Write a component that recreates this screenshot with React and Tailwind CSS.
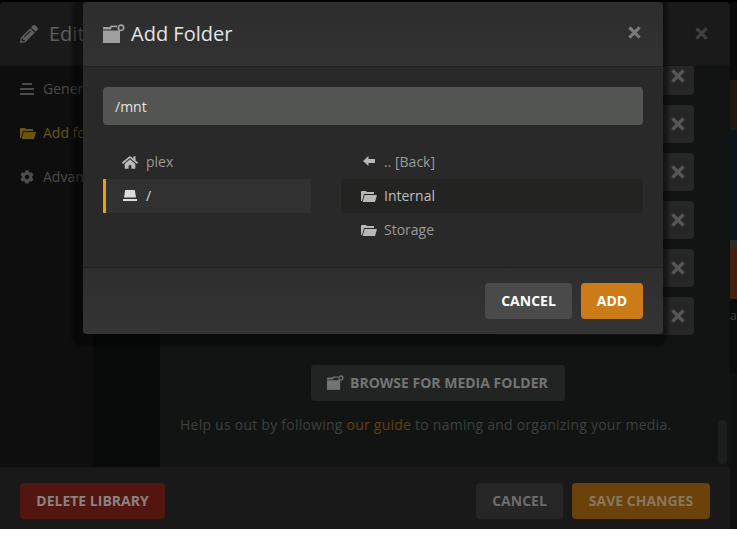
import React from "react";
import { FaCog, FaHome, FaPencilAlt } from "react-icons/fa";

function FolderAdd({ className }) {
  return (
    <svg viewBox="0 0 22 19" className={className} fill="currentColor">
      <path d="M0 5.5 L0 3.6 Q0 3 .6 3 L7 3 L8 1.6 L14 1.6 L14 3.2 L8.8 3.2 L8 5.5 Z" />
      <path d="M0 6.5 H17 V19 H0 Z" />
      <circle cx="18" cy="3.8" r="2.7" fill="none" stroke="currentColor" strokeWidth="1.7" />
    </svg>
  );
}

function FolderOpen({ className }) {
  return (
    <svg viewBox="0 0 16 12" className={className} fill="currentColor">
      <path d="M0 2 Q0 1 1 1 H5 L6 2 H13 V4 H3 L1 11 H0 Z" />
      <path d="M3.6 5 H16 L14 12 H1.6 Z" />
    </svg>
  );
}

function Drive({ className }) {
  return (
    <svg viewBox="0 0 14 12" className={className} fill="currentColor">
      <path d="M2.2 0 H11.8 L13 7.5 H1 Z" />
      <rect x="0" y="9" width="14" height="2" />
    </svg>
  );
}

function Lines({ className }) {
  return (
    <svg viewBox="0 0 14 12" className={className} fill="currentColor">
      <rect x="2" y="0" width="10" height="2" />
      <rect x="0" y="5" width="14" height="2" />
      <rect x="0" y="10" width="14" height="2" />
    </svg>
  );
}

function Cross({ className }) {
  return (
    <svg viewBox="0 0 14 14" className={className} fill="none" stroke="currentColor" strokeWidth="3.4">
      <path d="M1.5 1.5 L12.5 12.5 M12.5 1.5 L1.5 12.5" />
    </svg>
  );
}

function BackArrow({ className }) {
  return (
    <svg viewBox="0 0 12 10" className={className} fill="currentColor">
      <path d="M0 5 L5.5 0 V3 H12 V7 H5.5 V10 Z" />
    </svg>
  );
}

function SideItem({ icon, label, active }) {
  return (
    <div className={`flex items-center h-11 pl-5 text-sm whitespace-nowrap ${active ? "text-[#6b5410]" : "text-[#4c4c4c]"}`}>
      <span className="w-[23px] shrink-0">{icon}</span>
      {label}
    </div>
  );
}

function RemoveRow() {
  return (
    <div className="flex items-center justify-end pr-[9px] bg-[#262626] rounded-sm w-[200px] h-[38px] text-[#565656]">
      <Cross className="w-[14px] h-[14px]" />
    </div>
  );
}

function Background() {
  return (
    <div className="flex-1 flex flex-col min-w-0">
      <div className="h-[64px] shrink-0 bg-[#1a1a1a] rounded-t-sm flex items-center pl-5 pr-[22px] border-b border-[#161616]">
        <FaPencilAlt className="w-[18px] h-[18px] text-[#5e5e5e] mr-[11px]" />
        <span className="text-xl text-[#5f5f5f]">Edit Library</span>
        <Cross className="w-[13px] h-[13px] ml-auto text-[#3f3f3f]" />
      </div>

      <div className="flex-1 flex min-h-0">
        <div className="w-[93px] bg-[#0e0e0e] pt-[1px] shrink-0">
          <SideItem icon={<Lines className="w-[14px] h-[12px]" />} label="General" />
          <SideItem icon={<FolderOpen className="w-[16px] h-[12px]" />} label="Add folders" active />
          <SideItem icon={<FaCog className="w-[14px] h-[14px]" />} label="Advanced" />
        </div>
        <div className="w-[67px] bg-[#080a09] shrink-0" />
        <div className="flex-1 relative bg-[#111413] overflow-hidden">
          <div className="flex flex-col items-end gap-[10px] pr-[36px] mt-[-9px]">
            {[0, 1, 2, 3, 4, 5].map((i) => (
              <RemoveRow key={i} />
            ))}
          </div>
          <div className="flex justify-start pl-[151px] mt-[30px]">
            <div className="flex items-center h-9 w-[254px] rounded-sm bg-[#222423] text-[#747474] text-sm font-bold pl-4 whitespace-nowrap">
              <FolderAdd className="w-[17px] h-[15px] mr-[6px] mb-[2px]" />
              BROWSE FOR MEDIA FOLDER
            </div>
          </div>
          <p className="mt-[14px] pl-5 text-sm tracking-[0.24px] leading-[20px] text-[#3d403f] whitespace-nowrap">
            Help us out by following <span className="text-[#644107]">our guide</span> to naming and organizing your media.
          </p>
          <div className="absolute right-[3px] bottom-[3px] w-[9px] h-[44px] rounded-sm bg-[#1b1e1d]" />
        </div>
      </div>

      <div className="h-[62px] shrink-0 bg-[#191919] flex items-center pl-5 pr-5 gap-[9px] pt-[6px]">
        <div className="flex items-center justify-center w-[145px] h-9 rounded-sm bg-[#53150f] text-[#8c8280] text-sm font-bold mr-auto">
          DELETE LIBRARY
        </div>
        <div className="flex items-center justify-center w-[87px] h-9 rounded-sm bg-[#262626] text-[#6c6c6c] text-sm font-bold">
          CANCEL
        </div>
        <div className="flex items-center justify-center w-[138px] h-9 rounded-sm bg-[#6b4209] text-[#88775e] text-sm font-bold">
          SAVE CHANGES
        </div>
      </div>
    </div>
  );
}

function PosterStrip() {
  return (
    <div className="w-[7px] shrink-0 flex flex-col overflow-hidden bg-[#0a0a0a]">
      <div className="h-[78px] bg-[#0a0a0a]" />
      <div className="h-[50px] bg-[#1f1712]" />
      <div className="h-[110px] bg-[#0d141b]" />
      <div className="h-[8px] bg-[#2a2a2a]" />
      <div className="h-[51px] bg-[#44200f]" />
      <div className="h-[10px] bg-[#0b0b0b]" />
      <div className="h-[14px] bg-[#0b0b0b] text-[12px] leading-[14px] text-[#3e3e3e] overflow-hidden">ar</div>
      <div className="h-[50px] bg-[#0b0b0b]" />
      <div className="flex-1 bg-[#0e1010]" />
    </div>
  );
}

function ListRow({ icon, label, className = "", textClass = "text-[#9a9a9a]" }) {
  return (
    <div className={`flex items-center h-[34px] text-sm ${className}`}>
      <span className="w-[23px] shrink-0 flex items-center text-[#b8b8b8]">{icon}</span>
      <span className={textClass}>{label}</span>
    </div>
  );
}

function AddFolderModal() {
  return (
    <div className="absolute left-[83px] top-[2px] w-[580px] h-[332px] flex flex-col rounded-sm bg-[#292929] shadow-[-3px_4px_3px_8px_rgba(0,0,0,0.4)]">
      <div className="h-[65px] shrink-0 flex items-center pl-5 pr-[22px] bg-gradient-to-b from-[#2d2d2d] to-[#323232] border-b border-[#222222] rounded-t-sm">
        <FolderAdd className="w-[22px] h-[19px] text-[#a0a0a0] mr-[6px] mb-[2px]" />
        <span className="text-xl text-[#e4e4e4]">Add Folder</span>
        <Cross className="w-[13px] h-[13px] ml-auto mb-[4px] text-[#7a7a7a]" />
      </div>

      <div className="flex-1 px-5 pt-5">
        <div className="h-[38px] flex items-center pl-3 pt-[1px] rounded-sm bg-[#535553] text-sm text-[#e2e2e2]">/mnt</div>
        <div className="flex mt-5">
          <div className="w-[208px] shrink-0">
            <ListRow
              className="pl-5"
              icon={<FaHome className="w-[16px] h-[15px] -ml-[1px]" />}
              label="plex"
            />
            <ListRow
              className="pl-[17px] border-l-3 border-[#e5a00d] bg-[#313131]"
              icon={<Drive className="w-[14px] h-[12px] text-[#dcdcdc]" />}
              label="/"
              textClass="text-[#dcdcdc]"
            />
          </div>
          <div className="flex-1 ml-[30px]">
            <ListRow
              className="pl-5"
              icon={<BackArrow className="w-[12px] h-[10px] ml-[2px] mb-[2px]" />}
              label=".. [Back]"
            />
            <ListRow
              className="pl-5 bg-[#232422]"
              icon={<FolderOpen className="w-[16px] h-[12px]" />}
              label="Internal"
              textClass="text-[#bdbdbd]"
            />
            <ListRow
              className="pl-5"
              icon={<FolderOpen className="w-[16px] h-[12px]" />}
              label="Storage"
            />
          </div>
        </div>
      </div>

      <div className="h-[67px] shrink-0 flex items-center justify-end gap-[9px] px-5 bg-gradient-to-b from-[#2e2e2e] to-[#343434] border-t border-[#222222] rounded-b-sm">
        <div className="flex items-center justify-center w-[87px] h-9 rounded-sm bg-[#4a4a4a] text-white text-sm font-bold">
          CANCEL
        </div>
        <div className="flex items-center justify-center w-[62px] h-9 rounded-sm bg-[#cc7b19] text-white text-sm font-bold">
          ADD
        </div>
      </div>
    </div>
  );
}

export default function App() {
  return (
    <div className="relative h-[529px] w-[737px] overflow-hidden bg-black font-['Open_Sans',sans-serif]">
      <div className="h-full pt-[2px] flex">
        <Background />
        <PosterStrip />
      </div>
      <AddFolderModal />
    </div>
  );
}
